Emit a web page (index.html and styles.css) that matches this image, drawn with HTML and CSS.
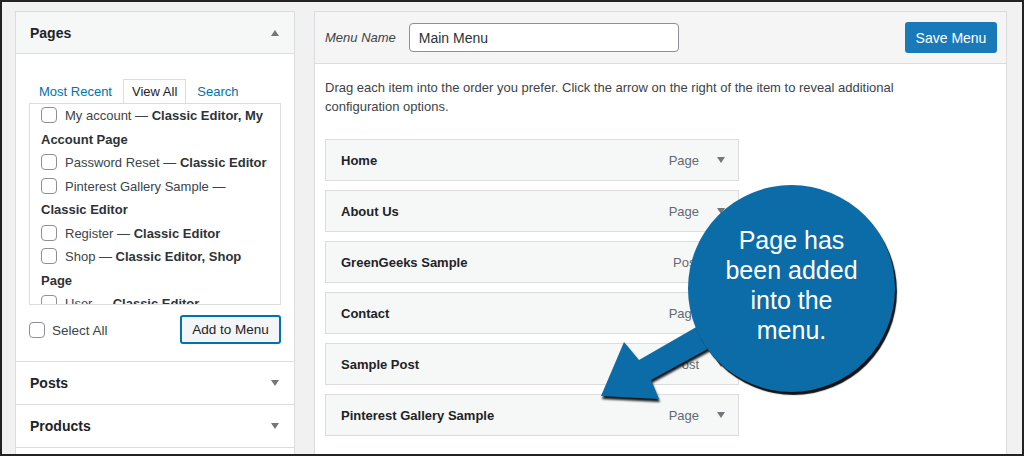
FILE: index.html
```html
<!DOCTYPE html>
<html lang="en">
<head>
  <meta charset="UTF-8">
  <title>Menus</title>
  <link rel="stylesheet" href="styles.css">
</head>
<body>
  <div class="frame">
    <div class="screen">
      <aside class="side">
        <div class="box">
          <div class="box-head"><h3>Pages</h3><span class="toggle up"></span></div>
          <div class="box-body">
            <ul class="tabs">
              <li><a>Most Recent</a></li>
              <li class="active">View All</li>
              <li><a>Search</a></li>
            </ul>
            <div class="checklist">
              <div class="item"><span class="cb"></span>My account — <b>Classic Editor, My Account Page</b></div>
              <div class="item"><span class="cb"></span>Password Reset — <b>Classic Editor</b></div>
              <div class="item"><span class="cb"></span>Pinterest Gallery Sample — <b>Classic Editor</b></div>
              <div class="item"><span class="cb"></span>Register — <b>Classic Editor</b></div>
              <div class="item"><span class="cb"></span>Shop — <b>Classic Editor, Shop Page</b></div>
              <div class="item"><span class="cb"></span>User — <b>Classic Editor</b></div>
            </div>
            <div class="list-foot">
              <label class="select-all"><span class="cb"></span>Select All</label>
              <button class="btn-add">Add to Menu</button>
            </div>
          </div>
        </div>
        <div class="box">
          <div class="box-head plain"><h3>Posts</h3><span class="toggle"></span></div>
        </div>
        <div class="box">
          <div class="box-head plain"><h3>Products</h3><span class="toggle"></span></div>
        </div>
        <div class="box">
          <div class="box-head plain"><h3>Custom Links</h3><span class="toggle"></span></div>
        </div>
      </aside>

      <main class="editor">
        <div class="editor-head">
          <label class="name-label">Menu Name</label>
          <input class="name-input" type="text" value="Main Menu">
          <button class="btn-save">Save Menu</button>
        </div>
        <div class="editor-body">
          <p class="hint">Drag each item into the order you prefer. Click the arrow on the right of the item to reveal additional configuration options.</p>
          <ul class="menu-items">
            <li><span class="title">Home</span><span class="type">Page</span><span class="toggle"></span></li>
            <li><span class="title">About Us</span><span class="type">Page</span><span class="toggle"></span></li>
            <li><span class="title">GreenGeeks Sample</span><span class="type">Post</span><span class="toggle"></span></li>
            <li><span class="title">Contact</span><span class="type">Page</span><span class="toggle"></span></li>
            <li><span class="title">Sample Post</span><span class="type">Post</span><span class="toggle"></span></li>
            <li><span class="title">Pinterest Gallery Sample</span><span class="type">Page</span><span class="toggle"></span></li>
          </ul>
        </div>
      </main>
    </div>

    <svg class="pointer" width="150" height="95" viewBox="0 0 150 95">
      <polygon points="21,76 44,22 59,40 125,2 135,25 71,60 79,79" fill="#0b6ca7"/>
    </svg>
    <div class="callout">
      <p>Page has<br>been added<br>into the<br>menu.</p>
    </div>
  </div>
</body>
</html>
```

FILE: styles.css
```css
* {
  box-sizing: border-box;
}
body {
  margin: 0;
  font-family: "Liberation Sans", Arial, sans-serif;
  color: #1d2327;
}
.frame {
  position: relative;
  width: 1024px;
  height: 456px;
  border: 2px solid #222;
  background: #f1f1f1;
  overflow: hidden;
}
.screen {
  display: flex;
  gap: 19px;
  padding: 9px 0 0 13px;
}

/* left column */
.side {
  width: 280px;
  flex: none;
  background: #fff;
  border: 1px solid #dcdcde;
}
.box {
  border-bottom: 1px solid #dcdcde;
}
.box-head {
  display: flex;
  align-items: center;
  justify-content: space-between;
  height: 42px;
  padding: 0 15px 0 14px;
  background: #f6f7f7;
  border-bottom: 1px solid #dcdcde;
}
.box-head.plain {
  background: #fff;
  border-bottom: none;
}
.box-head h3 {
  margin: 0;
  font-size: 14px;
  font-weight: bold;
}
.toggle {
  width: 0;
  height: 0;
  border-left: 4px solid transparent;
  border-right: 4px solid transparent;
  border-top: 6px solid #72777c;
}
.toggle.up {
  border-top: none;
  border-bottom: 6px solid #72777c;
}
.box-body {
  padding: 25px 13px 0 13px;
}
.tabs {
  list-style: none;
  margin: 0;
  padding: 0 0 0 1px;
  display: flex;
  font-size: 13px;
}
.tabs li {
  height: 24px;
  line-height: 23px;
  padding: 0 8px;
  margin-right: 2px;
  border: 1px solid transparent;
  border-bottom: none;
}
.tabs a {
  color: #0073aa;
}
.tabs li.active {
  background: #fff;
  border-color: #dcdcde;
  margin-bottom: -1px;
  position: relative;
}
.checklist {
  height: 202px;
  overflow: hidden;
  border: 1px solid #dcdcde;
  padding: 0 8px 0 11px;
  font-size: 13px;
  line-height: 23.5px;
  color: #3c434a;
}
.checklist b {
  color: #2c3338;
}
.cb {
  display: inline-block;
  width: 16px;
  height: 16px;
  border: 1px solid #8c8f94;
  border-radius: 4px;
  background: #fff;
  vertical-align: -3px;
  margin-right: 8px;
}
.list-foot {
  display: flex;
  align-items: center;
  justify-content: space-between;
  margin: 10px 0 17px 0;
  font-size: 13px;
  color: #3c434a;
}
.select-all {
  font-size: 13.5px;
}
.select-all .cb {
  margin-right: 7px;
}
.btn-add {
  width: 101px;
  height: 29px;
  border: 2px solid #0073aa;
  border-radius: 3px;
  background: #f3f5f6;
  color: #1d2327;
  font-family: inherit;
  font-size: 13.5px;
  padding: 0;
}

/* right column */
.editor {
  width: 693px;
  flex: none;
  height: 460px;
  background: #fff;
  border: 1px solid #dcdcde;
}
.editor-head {
  display: flex;
  align-items: center;
  height: 52px;
  padding: 0 9px 0 10px;
  background: #f5f5f5;
  border-bottom: 1px solid #dcdcde;
}
.name-label {
  font-size: 13px;
  font-style: italic;
  color: #3c434a;
  margin-right: 13px;
}
.name-input {
  width: 270px;
  height: 29px;
  border: 1px solid #8c8f94;
  border-radius: 4px;
  padding: 0 9px;
  font-family: inherit;
  font-size: 14px;
  color: #2c3338;
}
.btn-save {
  margin-left: auto;
  width: 92px;
  height: 31px;
  border: none;
  border-radius: 3px;
  background: #1a7ab9;
  color: #fff;
  font-family: inherit;
  font-size: 14px;
}
.editor-body {
  padding: 14px 10px 0 10px;
}
.hint {
  margin: 0;
  max-width: 615px;
  font-size: 13px;
  line-height: 19px;
  color: #3c434a;
}
.menu-items {
  list-style: none;
  margin: 23px 0 0 0;
  padding: 0;
  width: 414px;
  display: flex;
  flex-direction: column;
  gap: 9px;
}
.menu-items li {
  display: flex;
  align-items: center;
  height: 42px;
  padding: 0 13px 0 15px;
  background: #f6f7f7;
  border: 1px solid #dcdcde;
  font-size: 13px;
}
.menu-items .title {
  font-weight: bold;
  color: #1d2327;
}
.menu-items .type {
  margin-left: auto;
  margin-right: 18px;
  color: #646970;
}

/* callout */
.callout {
  position: absolute;
  left: 686px;
  top: 183px;
  width: 207px;
  height: 207px;
  border-radius: 50%;
  background: #0b6ca7;
  box-shadow: 2px 3px 1px #111;
  display: flex;
  align-items: center;
  justify-content: center;
  padding-bottom: 8px;
}
.callout p {
  margin: 0;
  text-align: center;
  color: #fff;
  font-family: Arial, "Liberation Sans", sans-serif;
  font-size: 25px;
  line-height: 30px;
}
.pointer {
  position: absolute;
  left: 578px;
  top: 318px;
  filter: drop-shadow(1px 3px 1px rgba(0, 0, 0, 0.9));
}
```
